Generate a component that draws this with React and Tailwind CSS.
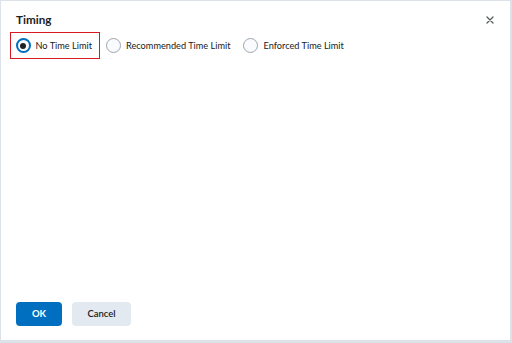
import React, { useState } from "react";

const options = ["No Time Limit", "Recommended Time Limit", "Enforced Time Limit"];

function Radio({ checked }) {
  return (
    <span
      className={
        "flex h-[15px] w-[15px] shrink-0 items-center justify-center rounded-full bg-[#f9fbff] " +
        (checked ? "border-2 border-[#006fbf]" : "border border-[#9ea5ab]")
      }
    >
      {checked && <span className="h-[6px] w-[6px] rounded-full bg-[#202122]" />}
    </span>
  );
}

export default function App() {
  const [value, setValue] = useState(0);

  return (
    <div className="h-[343px] w-[512px] bg-white font-['Lato','Noto_Sans',sans-serif] text-[#202122]">
      <div className="flex h-full w-full flex-col border-l border-t border-r-2 border-b-[3px] border-[#dde2e9]">
        <div className="flex items-center justify-between pl-[15px] pr-[16px] pt-[9px]">
          <h1 className="text-[11.7px] font-bold leading-[18px]">Timing</h1>
          <svg width="8" height="8" viewBox="0 0 8 8" className="mt-[1px]">
            <path d="M1 1L7 7M7 1L1 7" stroke="#565a5c" strokeWidth="1.3" strokeLinecap="round" />
          </svg>
        </div>
        <div className="mt-[4px] flex items-center pl-[9px]">
          {options.map((o, i) => (
            <label
              key={o}
              onClick={() => setValue(i)}
              className={
                "flex h-[27px] cursor-pointer items-center gap-[5px] border-[1.5px] text-[9.2px] " +
                (i === 0
                  ? "border-[#d71920] pl-[4.5px] pr-[7px]"
                  : i === 1
                  ? "ml-[5px] border-transparent"
                  : "ml-[11px] border-transparent")
              }
            >
              <Radio checked={value === i} />
              <span>{o}</span>
            </label>
          ))}
        </div>
        <div className="flex-1" />
        <div className="flex gap-[10px] pb-[14px] pl-[15px]">
          <button className="h-[24px] w-[46px] rounded-[4px] bg-[#006fbf] text-[9.5px] font-bold text-white">
            OK
          </button>
          <button className="h-[24px] w-[59px] rounded-[4px] bg-[#e3e9f1] text-[9.5px] font-semibold text-[#202122]">
            Cancel
          </button>
        </div>
      </div>
    </div>
  );
}
